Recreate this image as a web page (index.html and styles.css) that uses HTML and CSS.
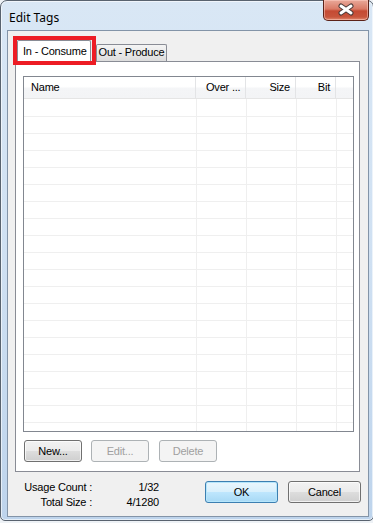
FILE: index.html
```html
<!DOCTYPE html>
<html lang="en">
<head>
    <meta charset="UTF-8">
    <title>Edit Tags</title>
    <link rel="stylesheet" href="styles.css">
</head>
<body>
    <div class="window">
        <div class="titlebar">
            <span class="title">Edit Tags</span>
            <div class="close-btn">
                <svg width="44" height="19" viewBox="0 0 44 19">
                    <path d="M17 6 L27 13 M27 6 L17 13" stroke="#4a3a38" stroke-width="5" stroke-linecap="round"/>
                    <path d="M17 6 L27 13 M27 6 L17 13" stroke="#ffffff" stroke-width="3" stroke-linecap="round"/>
                </svg>
            </div>
        </div>
        <div class="client">
            <div class="tabs">
                <div class="tab current">In - Consume</div>
                <div class="tab">Out - Produce</div>
            </div>
            <div class="panel">
                <div class="list">
                    <div class="list-head">
                        <div class="col col-name">Name</div>
                        <div class="col col-over">Over ...</div>
                        <div class="col col-size">Size</div>
                        <div class="col col-bit">Bit</div>
                        <div class="col col-fill"></div>
                    </div>
                    <div class="list-body">
                        <div class="col col-name"></div>
                        <div class="col col-over"></div>
                        <div class="col col-size"></div>
                        <div class="col col-bit"></div>
                        <div class="col col-fill"></div>
                    </div>
                </div>
                <div class="btn-group">
                    <button>New...</button>
                    <button disabled>Edit...</button>
                    <button disabled>Delete</button>
                </div>
            </div>
            <div class="footer">
                <div class="stats">
                    <span>Usage Count :</span><span>1/32</span>
                    <span>Total Size :</span><span>4/1280</span>
                </div>
                <div class="actions">
                    <button class="default">OK</button>
                    <button>Cancel</button>
                </div>
            </div>
        </div>
        <div class="highlight"></div>
    </div>
</body>
</html>
```

FILE: styles.css
```css
html, body {
    margin: 0;
}

body {
    background: #eef2f6;
    overflow: hidden;
    font-family: "Liberation Sans", Arial, sans-serif;
    font-size: 11px;
    letter-spacing: -0.2px;
    color: #000;
}

.window {
    position: relative;
    width: 374px;
    height: 521px;
    box-sizing: border-box;
    border: 1px solid #59636f;
    border-radius: 7px 7px 5px 5px;
    padding: 0 4px 3px 6px;
    background: linear-gradient(to bottom, #d9e7f5 0, #cfe0f2 50%, #bed4ec 100%);
    box-shadow: inset 0 0 0 1px rgba(255, 255, 255, 0.6);
    display: flex;
    flex-direction: column;
}

.titlebar {
    height: 29px;
    flex-shrink: 0;
    display: flex;
    align-items: flex-start;
}

.title {
    font-family: "Noto Sans", "Open Sans", sans-serif;
    font-size: 12px;
    letter-spacing: 0;
    line-height: 16px;
    margin: 9px 0 0 2px;
}

.close-btn {
    margin: -1px 0 0 auto;
    width: 46px;
    height: 21px;
    box-sizing: border-box;
    border: 1px solid #5b2219;
    border-top: none;
    border-radius: 0 0 5px 5px;
    background: linear-gradient(to bottom, #e9a99a 0, #d97a66 45%, #c54a33 55%, #c8553c 85%, #e08a70 100%);
    box-shadow: inset 0 0 0 1px rgba(255, 210, 200, 0.5);
}

.close-btn svg {
    display: block;
}

.client {
    flex: 1;
    border: 1px solid #8394a8;
    background: #f0f0f0;
    padding: 0 7px;
}

.tabs {
    display: flex;
    align-items: flex-end;
    height: 21px;
    margin-top: 9px;
    padding-left: 2px;
}

.tab {
    box-sizing: border-box;
    height: 17px;
    line-height: 15px;
    border: 1px solid #898c95;
    border-bottom: none;
    border-radius: 2px 2px 0 0;
    background: linear-gradient(to bottom, #f4f4f4 0, #e9e9e9 50%, #dcdcdc 100%);
    text-align: center;
    white-space: nowrap;
}

.tab.current {
    position: relative;
    z-index: 1;
    width: 74px;
    height: 22px;
    line-height: 20px;
    margin-bottom: -1px;
    background: #fff;
    padding-left: 5px;
    text-align: left;
}

.tab:not(.current) {
    width: 71px;
    margin-left: 5px;
}

.panel {
    width: 345px;
    height: 411px;
    box-sizing: border-box;
    border: 1px solid #898c95;
    background: #fff;
    padding: 14px 0 0 7px;
}

.list {
    width: 331px;
    height: 356px;
    box-sizing: border-box;
    border: 1px solid #828790;
    display: flex;
    flex-direction: column;
}

.list-head {
    height: 22px;
    box-sizing: border-box;
    border-bottom: 1px solid #e5e5e5;
    background: linear-gradient(to bottom, #ffffff 0, #ffffff 45%, #f4f5f7 55%, #f3f4f6 100%);
    display: flex;
}

.list-head .col {
    box-sizing: border-box;
    border-right: 1px solid #e3e4e6;
    line-height: 21px;
    white-space: nowrap;
}

.list-head .col-name { width: 172px; padding-left: 7px; }
.list-head .col-over { width: 50px; padding-left: 10px; }
.list-head .col-size { width: 50px; text-align: right; padding-right: 5px; }
.list-head .col-bit { width: 40px; text-align: right; padding-right: 5px; }
.list-head .col-fill { flex: 1; border-right: none; }

.list-body {
    flex: 1;
    display: flex;
    background: repeating-linear-gradient(to bottom, transparent 0, transparent 16px, #efefef 16px, #efefef 17px);
    background-position: 0 1px;
}

.list-body .col {
    box-sizing: border-box;
    border-right: 1px solid #efefef;
}

.list-body .col-name { width: 173px; }
.list-body .col-over { width: 50px; }
.list-body .col-size { width: 50px; }
.list-body .col-bit { width: 40px; }
.list-body .col-fill { flex: 1; border-right: none; }

button {
    box-sizing: border-box;
    height: 22px;
    padding: 0;
    font-family: inherit;
    font-size: 11px;
    letter-spacing: -0.2px;
    color: #000;
    border: 1px solid #707070;
    border-radius: 3px;
    background: linear-gradient(to bottom, #f2f2f2 0, #ebebeb 48%, #dddddd 52%, #cfcfcf 100%);
    box-shadow: inset 0 0 0 1px rgba(255, 255, 255, 0.7);
}

button:disabled {
    color: #a0a0a0;
    border-color: #adb2b5;
    background: #f4f4f4;
    box-shadow: none;
}

.btn-group {
    display: flex;
    gap: 9px;
    margin: 8px 0 0 1px;
}

.btn-group button {
    width: 58px;
}

.btn-group button:last-child {
    margin-left: 1px;
}

.footer {
    display: flex;
    margin-top: 8px;
    padding-left: 9px;
}

.stats {
    display: grid;
    grid-template-columns: 68px 67px;
    line-height: 15px;
    white-space: nowrap;
}

.stats span {
    justify-self: end;
}

.actions {
    display: flex;
    gap: 10px;
    margin: 1px 0 0 46px;
}

.actions button {
    width: 73px;
}

.actions .default {
    border-color: #3c7fb1;
    background: linear-gradient(to bottom, #eaf6fd 0, #d9f0fc 48%, #bee6fd 52%, #a7d9f5 100%);
    box-shadow: inset 0 0 0 1px #b6e6fb;
}

.highlight {
    position: absolute;
    left: 12px;
    top: 35px;
    width: 83px;
    height: 29px;
    box-sizing: border-box;
    border: 4px solid #ed1c24;
    z-index: 2;
}
```
